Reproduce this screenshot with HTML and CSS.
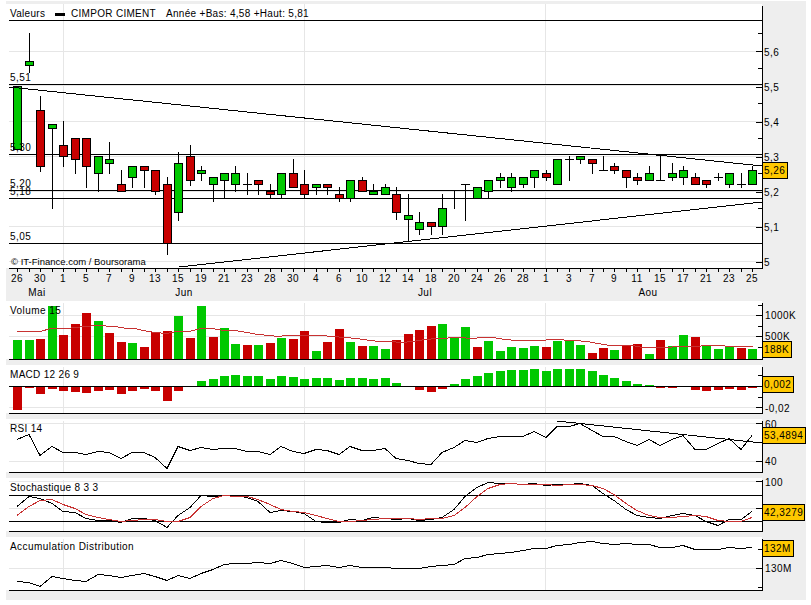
FILE: index.html
```html
<!DOCTYPE html>
<html lang="fr">
<head>
    <meta charset="UTF-8" />
    <meta name="viewport" content="width=device-width, initial-scale=1.0" />
    <title>CIMPOR CIMENT</title>
    <link rel="stylesheet" href="styles.css">
</head>
<body>
    <div class="chart">
      <svg class="panel" id="price" width="800" height="297" viewBox="6 4 800 297"></svg>
      <svg class="panel" id="volume" width="800" height="64" viewBox="6 301 800 64"></svg>
      <svg class="panel" id="macd" width="800" height="54" viewBox="6 365 800 54"></svg>
      <svg class="panel" id="rsi" width="800" height="59" viewBox="6 419 800 59"></svg>
      <svg class="panel" id="stoch" width="800" height="59" viewBox="6 478 800 59"></svg>
      <svg class="panel" id="accum" width="800" height="63" viewBox="6 537 800 63"></svg>
    </div>
    <script src="chart.js"></script>
</body>
</html>
```

FILE: styles.css
```css
* {
  margin: 0;
  padding: 0;
  box-sizing: border-box;
}

body {
  background: #ffffff;
  overflow: hidden;
}

.chart {
  width: 800px;
  height: 599px;
  margin: 1px 0 0 6px;
  padding-top: 3px;
  background: #eeeeee;
  display: flex;
  flex-direction: column;
}

.panel {
  display: block;
  flex: none;
}

.panel rect,
.panel line,
.panel polyline {
  shape-rendering: crispEdges;
}

.panel text {
  font-family: "Liberation Sans", Arial, sans-serif;
  font-size: 10px;
  letter-spacing: 0.45px;
  fill: #000000;
}

.panel text.title {
  letter-spacing: 0.3px;
}

.panel text.credit {
  font-size: 9.5px;
  letter-spacing: 0;
}

.plot { fill: #ffffff; }
.grid { fill: #e6e6e6; }
.ink { fill: #000000; }
.up { fill: #00c800; }
.down { fill: #c80000; }
.tag { fill: #ffc800; stroke: #000000; }

.trace {
  fill: none;
  stroke: #000000;
  stroke-width: 1;
}

.trace.signal {
  stroke: #c83232;
}

.centered {
  text-anchor: middle;
}
```

FILE: chart.js
```js
// all series are read off the picture at 3x, so row() brings them back to pixels
const row = (z) => Math.floor(z / 3);
const X0 = 17.3;
const STEP = 11.484;
const xAt = (i) => Math.round(X0 + STEP * i);
const COUNT = 65;
const LEFT = 9;
const AXIS = 762;
const DIVIDERS = [63, 304, 545];

// color, high, body top, body bottom, low (y in 3x px). "x" is a doji
const candles = [
  ["g",260,260,448,448],["g",100,184,197,218],["r",288,331,499,513],["g",373,373,385,626],
  ["r",363,436,469,500],["r",415,415,478,521],["r",415,415,499,563],["g",469,469,520,575],
  ["g",427,478,490,521],["r",511,553,574,574],["g",499,499,532,563],["r",499,499,511,563],
  ["r",511,511,574,584],["r",532,553,730,764],["g",457,490,637,660],["r",436,469,541,555],
  ["g",499,511,520,542],["g",532,532,553,605],["g",520,520,541,595],["g",499,520,553,575],
  ["x",520,553,553,584],["r",541,541,553,584],["r",553,573,583,595],["g",520,520,583,595],
  ["r",478,520,563,563],["r",511,553,583,595],["g",553,553,563,584],["r",553,553,563,584],
  ["r",563,584,595,605],["g",541,541,595,605],["r",532,541,574,574],["g",553,574,584,584],
  ["g",553,563,584,584],["r",563,584,637,659],["g",583,647,658,723],["g",637,667,689,702],
  ["r",667,667,679,702],["g",583,625,679,702],["x",573,0,0,626],["x",553,553,553,660],
  ["g",563,563,595,595],["g",541,541,573,595],["g",520,532,541,563],["g",520,532,563,575],
  ["g",532,532,553,563],["g",511,511,532,563],["r",511,520,532,542],["g",478,478,553,553],
  ["x",469,478,478,542],["g",469,469,478,490],["r",478,478,490,521],["x",469,511,511,511],
  ["r",490,499,511,521],["r",511,511,532,563],["r",520,532,541,553],["g",499,520,541,541],
  ["x",466,541,541,541],["g",490,520,532,541],["g",499,511,532,553],["r",520,532,553,553],
  ["r",541,541,553,563],["x",520,532,532,542],["g",520,520,553,563],["x",520,553,553,563],
  ["g",499,511,553,553],
];

const dates = [26,30,1,5,7,9,13,15,19,21,23,28,30,4,6,10,12,14,18,20,24,26,28,1,3,7,9,11,15,17,21,23,25];

const volume = [
  "g135","g135","r132","g33","r120","r87","r54","g78","r114","r141","g144","r156","r111","r108","g63",
  "r129","g33","r126","g99","g147","r150","g150","r144","g129","r132","r108","g168","r141","r102","g141",
  "r153","g153","g162","r135","r117","r105","r93","g87","g126","g96","r156","g138","g168","g156","g159",
  "g153","r156","g138","g135","g150","r174","r159","g165","r150","r147","g177","r135","g153","g120","r126",
  "g153","g162","g156","r159","g162",
];

// x, y in 3x px
const volumeAvg = [
  [52,109],[121,109],[154,100],[205,100],[223,97],[259,95],[292,91],[345,95],[380,100],[405,100],[430,105],
  [466,113],[499,116],[530,109],[568,109],[604,100],[637,100],[673,105],[706,107],[740,113],[775,118],[810,121],
  [830,124],[860,121],[960,121],[1000,124],[1035,127],[1070,130],[1110,135],[1140,139],[1170,139],[1205,142],
  [1240,139],[1275,134],[1310,130],[1380,127],[1415,130],[1450,127],[1480,127],[1515,133],[1550,136],[1620,136],
  [1655,133],[1725,135],[1760,140],[1795,146],[1830,151],[1895,151],[1930,158],[1965,156],[2070,153],[2140,150],
  [2210,155],[2258,155],
];

const macd = [
  345,279,297,282,288,291,294,288,285,297,288,282,288,318,288,0,258,252,243,240,243,243,252,
  243,246,252,249,249,255,249,249,252,249,264,0,285,291,282,267,252,243,234,228,225,225,222,
  228,222,222,222,228,240,249,258,267,270,279,279,0,285,288,285,282,285,279,
];

const rsi = [
  72,58,120,94,112,112,118,108,112,129,112,112,127,160,94,105,97,102,100,100,108,108,118,
  94,108,115,103,105,118,94,105,105,100,130,136,145,148,112,97,75,82,70,64,64,64,48,
  67,33,33,26,45,63,63,78,90,72,90,72,61,103,103,85,70,103,60,
];

const stochK = [
  170,138,145,160,183,187,205,212,212,217,205,205,212,232,195,172,137,140,137,137,141,155,187,
  180,185,190,214,217,217,208,212,202,205,208,205,212,208,202,178,140,112,97,100,101,102,101,
  105,102,103,100,107,130,150,177,197,202,205,195,189,195,214,227,208,208,185,
];

const stochD = [
  197,168,150,148,163,175,194,202,208,214,212,208,209,214,214,202,168,146,137,139,139,147,163,
  178,183,187,197,205,214,214,211,208,205,205,205,209,205,205,197,172,140,115,102,100,104,103,
  103,105,103,103,106,115,132,160,180,195,203,203,198,195,200,212,214,214,202,
];

const accum = [
  394,398,410,379,384,390,394,373,376,382,376,370,380,391,376,385,370,358,343,340,340,337,341,
  331,340,352,349,346,352,346,352,352,352,355,355,355,349,346,343,325,322,313,310,307,301,295,
  295,286,282,276,274,280,283,280,283,283,292,292,286,298,298,298,292,296,292,
];

function rect(x, y, w, h, cls) {
  return `<rect class="${cls}" x="${x}" y="${y}" width="${w}" height="${h}"/>`;
}

function text(x, y, str, cls) {
  return `<text x="${x}" y="${y}"${cls ? ` class="${cls}"` : ""}>${str}</text>`;
}

function hline(y, cls) {
  return rect(LEFT, y, AXIS - LEFT, 1, cls);
}

function trace(points, cls) {
  const pts = points.map((p) => p[0] + "," + (p[1] + 0.5)).join(" ");
  return `<polyline class="trace${cls ? " " + cls : ""}" points="${pts}"/>`;
}

// white area, dividers, gridlines
function frame(top, bottom, axisTop, grids) {
  let s = rect(6, top, AXIS - 6, bottom - top, "plot");
  grids.forEach((y) => { s += hline(y, "grid"); });
  DIVIDERS.forEach((x) => { s += rect(x, axisTop, 1, bottom - axisTop, "grid"); });
  return s;
}

// right axis line, the ticks and the bottom line
function axis(axisTop, bottom, major, minor) {
  let s = rect(AXIS, axisTop, 1, bottom - axisTop + 1, "ink");
  s += hline(bottom, "ink");
  major.forEach((y) => { s += rect(AXIS - 6, y, 6, 1, "ink"); });
  minor.forEach((y) => { s += rect(AXIS - 4, y, 4, 1, "ink"); });
  return s;
}

function tag(y, w, label) {
  return `<rect class="tag" x="${AXIS + 0.5}" y="${y + 0.5}" width="${w}" height="16"/>` +
    text(AXIS + 2, y + 12, label);
}

function series(values, conv) {
  return values.map((v, i) => [xAt(i), conv(v)]);
}

function drawPrice() {
  const svg = document.getElementById("price");
  let s = frame(4, 268, 4, [51, 85, 121, 156, 191, 226, 261]);

  [20, 84, 154, 190, 198, 243].forEach((y) => { s += hline(y, "ink"); });

  candles.forEach((c, i) => {
    const x = xAt(i);
    const hi = row(c[1]);
    const lo = row(c[4]);
    s += rect(x, hi, 1, lo - hi + 1, "ink");
    if (c[0] === "x") {
      if (c[2]) s += rect(x - 4, row(c[2]), 9, 1, "ink");
      return;
    }
    const top = row(c[2]);
    const bot = row(c[3]);
    s += rect(x - 4, top, 9, bot - top + 1, "ink");
    s += rect(x - 3, top + 1, 7, bot - top - 1, c[0] === "g" ? "up" : "down");
  });
  // these two dojis also have a bar at the top of the wick
  s += rect(xAt(56) - 4, 155, 9, 1, "ink");
  s += rect(xAt(39) - 4, 184, 9, 1, "ink");

  s += `<polyline class="trace" points="9,87 762,166"/>`;
  s += `<polyline class="trace" points="179,267 762,202"/>`;

  s += axis(6, 268,
    [51, 87, 122, 157, 192, 227, 262],
    [33, 68, 103, 138, 173, 208, 243]);
  for (let i = 0; i < COUNT; i++) s += rect(xAt(i), 269, 1, 3, "ink");

  dates.forEach((d, i) => { s += text(xAt(i * 2), 282, d, "centered"); });
  s += text(37, 296, "Mai", "centered");
  s += text(184, 296, "Jun", "centered");
  s += text(425, 296, "Jul", "centered");
  s += text(648, 296, "Aou", "centered");

  s += text(10, 17, "Valeurs", "title");
  s += rect(55, 13, 10, 3, "ink");
  s += text(71, 17, "CIMPOR CIMENT", "title");
  s += text(166, 17, "Année +Bas: 4,58 +Haut: 5,81", "title");
  s += text(10, 81, "5,51");
  s += text(10, 151, "5,30");
  s += text(10, 187, "5,20");
  s += text(10, 195, "5,18");
  s += text(10, 240, "5,05");
  s += text(11, 265, "© IT-Finance.com / Boursorama", "credit");

  ["5,6", "5,5", "5,4", "5,3", "5,2", "5,1", "5"].forEach((l, i) => {
    s += text(764, 56 + i * 35, l);
  });
  s += tag(162, 25, "5,26");
  svg.innerHTML = s;
}

function drawVolume() {
  const svg = document.getElementById("volume");
  let s = frame(301, 359, 303, [315, 336]);
  volume.forEach((v, i) => {
    const top = 295 + row(+v.slice(1));
    s += rect(xAt(i) - 4, top, 9, 358 - top + 1, v[0] === "g" ? "up" : "down");
  });
  s += trace(volumeAvg.map((p) => [Math.round(p[0] / 3), 295 + row(p[1])]), "signal");
  s += axis(303, 359, [315, 336], [305, 326, 347]);
  s += text(10, 314, "Volume 15");
  s += text(765, 319, "1000K");
  s += text(765, 340, "500K");
  s += tag(341, 29, "188K");
  svg.innerHTML = s;
}

function drawMacd() {
  const svg = document.getElementById("macd");
  let s = frame(365, 413, 367, [407]);
  const zero = 386;
  macd.forEach((v, i) => {
    if (!v) return;
    const y = 295 + row(v);
    if (y > zero) s += rect(xAt(i) - 4, zero, 9, y - zero, "down");
    else s += rect(xAt(i) - 4, y, 9, zero - y, "up");
  });
  s += hline(zero, "ink");
  s += axis(367, 413, [386, 407], [375, 397]);
  s += text(10, 378, "MACD 12 26 9", "title");
  s += text(765, 412, "-0,02");
  s += tag(376, 31, "0,002");
  svg.innerHTML = s;
}

function drawRsi() {
  const svg = document.getElementById("rsi");
  let s = frame(419, 472, 421, [423, 461]);
  s += trace(series(rsi, (v) => 415 + row(v)));
  s += `<polyline class="trace" points="557,421 762,443"/>`;
  s += axis(421, 472, [423, 461], [442]);
  s += text(10, 432, "RSI 14", "title");
  s += text(765, 428, "60");
  s += text(765, 465, "40");
  s += tag(427, 43, "53,4894");
  svg.innerHTML = s;
}

function drawStoch() {
  const svg = document.getElementById("stoch");
  let s = frame(478, 531, 480, [481, 508]);
  s += hline(495, "ink") + hline(521, "ink");
  s += trace(series(stochK, (v) => 450 + row(v)));
  s += trace(series(stochD, (v) => 450 + row(v)), "signal");
  s += axis(480, 531, [481, 508], []);
  s += text(10, 491, "Stochastique 8 3 3", "title");
  s += text(765, 486, "100");
  s += tag(504, 42, "42,3279");
  svg.innerHTML = s;
}

function drawAccum() {
  const svg = document.getElementById("accum");
  let s = frame(537, 590, 539, [568]);
  s += trace(series(accum, (v) => 450 + row(v)));
  s += axis(539, 590, [568], [549, 587]);
  s += text(10, 550, "Accumulation Distribution");
  s += text(765, 572, "130M");
  s += tag(540, 31, "132M");
  svg.innerHTML = s;
}

drawPrice();
drawVolume();
drawMacd();
drawRsi();
drawStoch();
drawAccum();
```
